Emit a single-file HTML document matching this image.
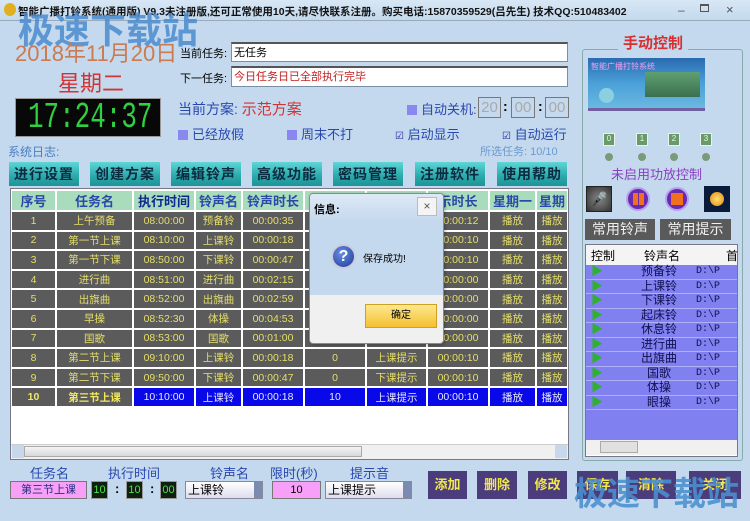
<!DOCTYPE html>
<html><head><meta charset="utf-8"><style>
*{margin:0;padding:0;box-sizing:border-box}
body{width:750px;height:521px;overflow:hidden;background:#c4d9ee;font-family:"Liberation Sans","Noto Sans CJK SC",sans-serif;position:relative}
.a{position:absolute;white-space:nowrap}
.inp{position:absolute;background:#fff;border:1px solid #7a8ea6;border-top:2px solid #555;font-size:11px;padding:2px 2px;line-height:14px}
.btn{position:absolute;top:162px;width:70px;height:24px;background:linear-gradient(#5fd6d6,#2aa8aa 60%,#1e9496);color:#0c2a40;font-weight:bold;font-size:14px;text-align:center;line-height:24px;letter-spacing:1px}
table{position:absolute;left:10px;top:189px;border-spacing:2px;table-layout:fixed;font-size:10.5px}
td{height:17.6px;background:#5b5b5b;color:#e6df6a;text-align:center;padding:0;overflow:hidden;white-space:nowrap}
th{height:18px;background:#a9dcbc;color:#2a48a8;font-size:13px;font-weight:bold;overflow:hidden;white-space:nowrap}
tr.sel td{background:#0808e8;color:#e8e8ff}
tr.sel td:first-child,tr.sel td:nth-child(2){background:#5b5b5b;color:#f2e860;font-weight:bold}
.chk{display:inline-block;width:10px;height:10px;background:#8888f0;margin-right:4px;vertical-align:-1px}
.pb{position:absolute;top:471px;height:28px;background:#4b3c7c;color:#f2e84a;font-size:13px;font-weight:bold;text-align:center;line-height:28px}
.lst{font-family:"Liberation Mono","Noto Sans CJK SC",monospace}
</style></head><body>
<div class="a" style="left:0;top:0;width:750px;height:20px;background:linear-gradient(#d8e7f5,#c4d9ee)"></div>
<div class="a" style="left:4px;top:3px;width:12px;height:13px;border-radius:50%;background:#e0b020"></div>
<div class="a" style="left:18px;top:4px;font-size:10.5px;font-weight:bold;color:#111">智能广播打铃系统(通用版) V9.3未注册版,还可正常使用10天,请尽快联系注册。购买电话:15870359529(吕先生) 技术QQ:510483402</div>
<div class="a" style="left:678px;top:3px;font-size:12px;color:#555">–</div>
<div class="a" style="left:700px;top:4px;width:9px;height:8px;border:1px solid #555;border-top:2px solid #555"></div>
<div class="a" style="left:726px;top:2px;font-size:13px;color:#555">×</div>
<div class="a" style="left:0;top:20px;width:750px;height:1px;background:#9ab"></div>

<div class="a" style="left:18px;top:2px;font-size:36px;font-weight:bold;color:#4a8cd0;opacity:.85">极速下载站</div>
<div class="a" style="left:15px;top:36px;font-size:22px;color:#cc7a50">2018年11月20日</div>
<div class="a" style="left:58px;top:66px;font-size:22px;color:#d03434">星期二</div>
<div class="a" style="left:15px;top:98px;width:146px;height:39px;background:#080808;border:1px solid #999"></div>
<div class="a" style="left:28px;top:99px;font-size:36px;line-height:38px;color:#30d040;font-family:'Liberation Mono',monospace;transform:scaleX(0.72);transform-origin:left top">17:24:37</div>

<div class="a" style="left:180px;top:45px;font-size:11px">当前任务:</div>
<div class="inp" style="left:231px;top:42px;width:337px;height:20px">无任务</div>
<div class="a" style="left:180px;top:70px;font-size:11px">下一任务:</div>
<div class="inp" style="left:231px;top:66px;width:337px;height:21px;color:#c02020">今日任务日已全部执行完毕</div>
<div class="a" style="left:178px;top:98px;font-size:14px;color:#2848b0">当前方案: <span style="color:#d03434;font-size:15px">示范方案</span></div>
<div class="a" style="left:407px;top:99px;font-size:13px;color:#2848b0"><span class="chk"></span>自动关机:</div>
<div class="a" style="left:478px;top:97px;width:23px;height:21px;border:1px solid #777;color:#aaa;font-size:15px;text-align:center;line-height:19px">20</div>
<div class="a" style="left:503px;top:98px;font-size:14px;font-weight:bold">:</div>
<div class="a" style="left:511px;top:97px;width:24px;height:21px;border:1px solid #777;color:#aaa;font-size:15px;text-align:center;line-height:19px">00</div>
<div class="a" style="left:538px;top:98px;font-size:14px;font-weight:bold">:</div>
<div class="a" style="left:545px;top:97px;width:24px;height:21px;border:1px solid #777;color:#aaa;font-size:15px;text-align:center;line-height:19px">00</div>
<div class="a" style="left:178px;top:124px;font-size:13px;color:#2848b0"><span class="chk"></span>已经放假</div>
<div class="a" style="left:287px;top:124px;font-size:13px;color:#2848b0"><span class="chk"></span>周末不打</div>
<div class="a" style="left:395px;top:124px;font-size:13px;color:#2848b0"><span style="font-size:10px;color:#2020a0">☑</span> 启动显示</div>
<div class="a" style="left:502px;top:124px;font-size:13px;color:#2848b0"><span style="font-size:10px;color:#2020a0">☑</span> 自动运行</div>
<div class="a" style="left:8px;top:143px;font-size:12px;color:#4a7ec0">系统日志:</div>
<div class="a" style="left:480px;top:143px;font-size:11px;color:#6a9ad0">所选任务: 10/10</div>

<div class="btn" style="left:9px">进行设置</div>
<div class="btn" style="left:90px">创建方案</div>
<div class="btn" style="left:171px">编辑铃声</div>
<div class="btn" style="left:252px">高级功能</div>
<div class="btn" style="left:333px">密码管理</div>
<div class="btn" style="left:415px">注册软件</div>
<div class="btn" style="left:497px">使用帮助</div>

<div class="a" style="left:10px;top:188px;width:559px;height:272px;background:#fff;border:1px solid #778"></div>
<table>
<colgroup><col style="width:43px"><col style="width:75px"><col style="width:60px"><col style="width:45px"><col style="width:60px"><col style="width:60px"><col style="width:59px"><col style="width:60px"><col style="width:45px"><col style="width:30px"></colgroup>
<tr><th>序号</th><th>任务名</th><th style="color:#102890">执行时间</th><th>铃声名</th><th>铃声时长</th><th></th><th></th><th>示时长</th><th>星期一</th><th>星期</th></tr>
<tr><td>1</td><td>上午预备</td><td>08:00:00</td><td>预备铃</td><td>00:00:35</td><td></td><td></td><td>00:00:12</td><td>播放</td><td>播放</td></tr>
<tr><td>2</td><td>第一节上课</td><td>08:10:00</td><td>上课铃</td><td>00:00:18</td><td></td><td></td><td>00:00:10</td><td>播放</td><td>播放</td></tr>
<tr><td>3</td><td>第一节下课</td><td>08:50:00</td><td>下课铃</td><td>00:00:47</td><td></td><td></td><td>00:00:10</td><td>播放</td><td>播放</td></tr>
<tr><td>4</td><td>进行曲</td><td>08:51:00</td><td>进行曲</td><td>00:02:15</td><td></td><td></td><td>00:00:00</td><td>播放</td><td>播放</td></tr>
<tr><td>5</td><td>出旗曲</td><td>08:52:00</td><td>出旗曲</td><td>00:02:59</td><td></td><td></td><td>00:00:00</td><td>播放</td><td>播放</td></tr>
<tr><td>6</td><td>早操</td><td>08:52:30</td><td>体操</td><td>00:04:53</td><td></td><td></td><td>00:00:00</td><td>播放</td><td>播放</td></tr>
<tr><td>7</td><td>国歌</td><td>08:53:00</td><td>国歌</td><td>00:01:00</td><td></td><td></td><td>00:00:00</td><td>播放</td><td>播放</td></tr>
<tr><td>8</td><td>第二节上课</td><td>09:10:00</td><td>上课铃</td><td>00:00:18</td><td>0</td><td>上课提示</td><td>00:00:10</td><td>播放</td><td>播放</td></tr>
<tr><td>9</td><td>第二节下课</td><td>09:50:00</td><td>下课铃</td><td>00:00:47</td><td>0</td><td>下课提示</td><td>00:00:10</td><td>播放</td><td>播放</td></tr>
<tr class="sel"><td>10</td><td>第三节上课</td><td>10:10:00</td><td>上课铃</td><td>00:00:18</td><td>10</td><td>上课提示</td><td>00:00:10</td><td>播放</td><td>播放</td></tr>
</table>
<div class="a" style="left:11px;top:444px;width:557px;height:15px;background:#f0f0f0;border-top:1px solid #ccc"></div>
<div class="a" style="left:12px;top:445px;width:12px;height:13px;background:#c8d8ec"></div>
<div class="a" style="left:24px;top:446px;width:338px;height:11px;background:linear-gradient(#f4f4f4,#d8d8d8);border:1px solid #aaa"></div>
<div class="a" style="left:555px;top:445px;width:12px;height:13px;background:#c8d8ec"></div>

<div class="a" style="left:309px;top:193px;width:135px;height:151px;border:1px solid #889;border-radius:4px;background:#f0f0f0;box-shadow:1px 1px 3px rgba(0,0,0,.3);overflow:hidden">
 <div class="a" style="left:0;top:0;width:135px;height:25px;background:linear-gradient(#dde9f6,#c8daee)"></div>
 <div class="a" style="left:4px;top:7px;font-size:11px;font-weight:bold">信息:</div>
 <div class="a" style="left:107px;top:3px;width:20px;height:19px;background:#f4f4f4;border:1px solid #bbb;font-size:12px;text-align:center;line-height:17px;color:#555">×</div>
 <div class="a" style="left:0;top:25px;width:135px;height:76px;background:#c4d9ee"></div>
 <div class="a" style="left:21px;top:50px;width:25px;height:25px;border-radius:50%;background:radial-gradient(circle at 40% 35%,#6a8ee0,#1a3a9a);border:2px solid #ccd;color:#fff;font-weight:bold;font-size:16px;text-align:center;line-height:21px">?</div>
 <div class="a" style="left:53px;top:56px;font-size:10px">保存成功!</div>
 <div class="a" style="left:55px;top:110px;width:72px;height:24px;background:linear-gradient(#fde890,#f4c030);border:1px solid #d0a020;font-size:10px;text-align:center;line-height:22px">确定</div>
</div>

<div class="a" style="left:582px;top:49px;width:161px;height:412px;border:1px solid #8aa;border-radius:3px"></div>
<div class="a" style="left:618px;top:32px;padding:0 5px;background:#c4d9ee;font-size:15px;font-weight:bold;color:#d83030">手动控制</div>
<div class="a" style="left:588px;top:58px;width:117px;height:53px;background:linear-gradient(#2a6ab0,#4aa0d8 50%,#6ab8e0);border-bottom:3px solid #7060a0"></div>
<div class="a" style="left:591px;top:61px;font-size:8px;color:#f0a0f0">智能广播打铃系统</div>
<div class="a" style="left:645px;top:72px;width:55px;height:25px;background:linear-gradient(#60a070,#3a7050)"></div>
<div class="a" style="left:599px;top:88px;width:15px;height:15px;border-radius:50%;background:#8ad0e0"></div>
<div class="a" style="left:603px;top:133px;width:12px;height:13px;background:#6a9a6a;border:1px solid #eee;font-size:8px;color:#dfd;text-align:center">0</div>
<div class="a" style="left:636px;top:133px;width:12px;height:13px;background:#6a9a6a;border:1px solid #eee;font-size:8px;color:#dfd;text-align:center">1</div>
<div class="a" style="left:668px;top:133px;width:12px;height:13px;background:#6a9a6a;border:1px solid #eee;font-size:8px;color:#dfd;text-align:center">2</div>
<div class="a" style="left:700px;top:133px;width:12px;height:13px;background:#6a9a6a;border:1px solid #eee;font-size:8px;color:#dfd;text-align:center">3</div>
<div class="a" style="left:605px;top:153px;width:8px;height:8px;border-radius:50%;background:#7a9a7a"></div>
<div class="a" style="left:638px;top:153px;width:8px;height:8px;border-radius:50%;background:#7a9a7a"></div>
<div class="a" style="left:670px;top:153px;width:8px;height:8px;border-radius:50%;background:#7a9a7a"></div>
<div class="a" style="left:702px;top:153px;width:8px;height:8px;border-radius:50%;background:#7a9a7a"></div>
<div class="a" style="left:611px;top:164px;font-size:13px;color:#8a40c0">未启用功放控制</div>
<div class="a" style="left:586px;top:186px;width:26px;height:26px;background:radial-gradient(#888,#333);border:1px solid #222;color:#ddd;font-size:14px;text-align:center;line-height:24px">🎤</div>
<div class="a" style="left:626px;top:187px;width:24px;height:24px;border-radius:50%;background:#6a2ab0;border:2px solid #b8a0f0"><div class="a" style="left:5px;top:4px;width:5px;height:12px;background:#f07020"></div><div class="a" style="left:11px;top:4px;width:5px;height:12px;background:#f07020"></div></div>
<div class="a" style="left:665px;top:187px;width:24px;height:24px;border-radius:50%;background:#6a2ab0;border:2px solid #b8a0f0"><div class="a" style="left:4px;top:4px;width:12px;height:12px;background:#f07020"></div></div>
<div class="a" style="left:704px;top:186px;width:26px;height:26px;background:#0a1a3a"><div class="a" style="left:6px;top:6px;width:14px;height:14px;border-radius:50%;background:radial-gradient(#ffe070,#e08a10)"></div></div>
<div class="a" style="left:585px;top:219px;width:70px;height:21px;background:#5a5a5a;color:#f0f0f0;font-size:14px;text-align:center;line-height:21px">常用铃声</div>
<div class="a" style="left:660px;top:219px;width:71px;height:21px;background:#5a5a5a;color:#f0f0f0;font-size:14px;text-align:center;line-height:21px">常用提示</div>
<div class="a" style="left:585px;top:244px;width:153px;height:213px;background:#fff;border:1px solid #778"></div>
<div class="a" style="left:586px;top:245px;width:151px;height:20px;background:#f4f4f4;font-size:12px">
 <span class="a" style="left:5px;top:2px">控制</span><span class="a" style="left:58px;top:2px">铃声名</span><span class="a" style="left:140px;top:2px">首</span>
</div>
<div class="a" style="left:586px;top:265px;width:151px;height:175px;background:#8080f0"></div>
<div class="a lst" style="left:586px;top:265px;width:151px;font-size:12px;line-height:14.5px;color:#101050">
<div style="position:relative;height:14.5px;border-bottom:1px solid #b0b0f8"><span style="color:#30b030;position:absolute;left:5px">▶</span><span style="position:absolute;left:55px">预备铃</span><span style="position:absolute;left:110px;font-size:10px">D:\P</span></div>
<div style="position:relative;height:14.5px;border-bottom:1px solid #b0b0f8"><span style="color:#30b030;position:absolute;left:5px">▶</span><span style="position:absolute;left:55px">上课铃</span><span style="position:absolute;left:110px;font-size:10px">D:\P</span></div>
<div style="position:relative;height:14.5px;border-bottom:1px solid #b0b0f8"><span style="color:#30b030;position:absolute;left:5px">▶</span><span style="position:absolute;left:55px">下课铃</span><span style="position:absolute;left:110px;font-size:10px">D:\P</span></div>
<div style="position:relative;height:14.5px;border-bottom:1px solid #b0b0f8"><span style="color:#30b030;position:absolute;left:5px">▶</span><span style="position:absolute;left:55px">起床铃</span><span style="position:absolute;left:110px;font-size:10px">D:\P</span></div>
<div style="position:relative;height:14.5px;border-bottom:1px solid #b0b0f8"><span style="color:#30b030;position:absolute;left:5px">▶</span><span style="position:absolute;left:55px">休息铃</span><span style="position:absolute;left:110px;font-size:10px">D:\P</span></div>
<div style="position:relative;height:14.5px;border-bottom:1px solid #b0b0f8"><span style="color:#30b030;position:absolute;left:5px">▶</span><span style="position:absolute;left:55px">进行曲</span><span style="position:absolute;left:110px;font-size:10px">D:\P</span></div>
<div style="position:relative;height:14.5px;border-bottom:1px solid #b0b0f8"><span style="color:#30b030;position:absolute;left:5px">▶</span><span style="position:absolute;left:55px">出旗曲</span><span style="position:absolute;left:110px;font-size:10px">D:\P</span></div>
<div style="position:relative;height:14.5px;border-bottom:1px solid #b0b0f8"><span style="color:#30b030;position:absolute;left:5px">▶</span><span style="position:absolute;left:61px">国歌</span><span style="position:absolute;left:110px;font-size:10px">D:\P</span></div>
<div style="position:relative;height:14.5px;border-bottom:1px solid #b0b0f8"><span style="color:#30b030;position:absolute;left:5px">▶</span><span style="position:absolute;left:61px">体操</span><span style="position:absolute;left:110px;font-size:10px">D:\P</span></div>
<div style="position:relative;height:14.5px;border-bottom:1px solid #b0b0f8"><span style="color:#30b030;position:absolute;left:5px">▶</span><span style="position:absolute;left:61px">眼操</span><span style="position:absolute;left:110px;font-size:10px">D:\P</span></div>
</div>
<div class="a" style="left:586px;top:440px;width:151px;height:15px;background:#f0f0f0"></div>
<div class="a" style="left:600px;top:441px;width:38px;height:12px;background:#e0e0e0;border:1px solid #aaa"></div>

<div class="a" style="left:30px;top:463px;font-size:13px;color:#2848b0">任务名</div>
<div class="a" style="left:108px;top:463px;font-size:13px;color:#2848b0">执行时间</div>
<div class="a" style="left:210px;top:463px;font-size:13px;color:#2848b0">铃声名</div>
<div class="a" style="left:270px;top:463px;font-size:13px;color:#2848b0">限时(秒)</div>
<div class="a" style="left:350px;top:463px;font-size:13px;color:#2848b0">提示音</div>
<div class="a" style="left:10px;top:481px;width:77px;height:18px;background:#f8a0f8;border:1px solid #777;font-size:11px;text-align:center;line-height:16px;color:#203080">第三节上课</div>
<div class="a" style="left:91px;top:481px;width:17px;height:18px;background:#102010;border:1px solid #999;color:#50e050;font-size:11px;text-align:center;line-height:16px">10</div>
<div class="a" style="left:115px;top:481px;font-size:13px;font-weight:bold">:</div>
<div class="a" style="left:126px;top:481px;width:17px;height:18px;background:#102010;border:1px solid #999;color:#50e050;font-size:11px;text-align:center;line-height:16px">10</div>
<div class="a" style="left:150px;top:481px;font-size:13px;font-weight:bold">:</div>
<div class="a" style="left:160px;top:481px;width:17px;height:18px;background:#102010;border:1px solid #999;color:#50e050;font-size:11px;text-align:center;line-height:16px">00</div>
<div class="a" style="left:185px;top:481px;width:78px;height:18px;background:linear-gradient(#fff,#dde);border:1px solid #889;font-size:12px;line-height:16px;padding-left:2px">上课铃</div>
<div class="a" style="left:254px;top:482px;width:8px;height:16px;background:#7a8ab0"></div>
<div class="a" style="left:272px;top:481px;width:49px;height:18px;background:#f8a0f8;border:1px solid #777;font-size:11px;text-align:center;line-height:16px">10</div>
<div class="a" style="left:325px;top:481px;width:87px;height:18px;background:linear-gradient(#fff,#dde);border:1px solid #889;font-size:12px;line-height:16px;padding-left:2px">上课提示</div>
<div class="a" style="left:403px;top:482px;width:8px;height:16px;background:#7a8ab0"></div>
<div class="pb" style="left:428px;width:39px">添加</div>
<div class="pb" style="left:477px;width:40px">删除</div>
<div class="pb" style="left:528px;width:39px">修改</div>
<div class="pb" style="left:577px;width:41px">保存</div>
<div class="pb" style="left:626px;width:50px">清除</div>
<div class="pb" style="left:689px;width:52px">关闭</div>
<div class="a" style="left:574px;top:467px;font-size:33px;font-weight:bold;color:#4a90d0;opacity:.88">极速下载站</div>
</body></html>
